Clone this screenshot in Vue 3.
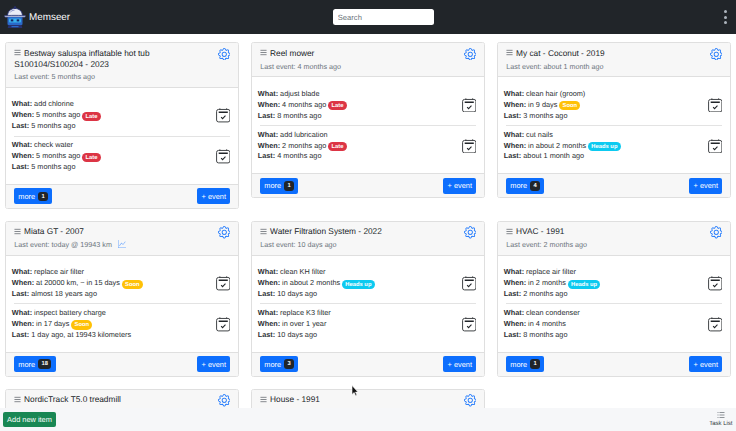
<script setup>
const gear = [
  'M8 4.754a3.246 3.246 0 1 0 0 6.492 3.246 3.246 0 0 0 0-6.492zM5.754 8a2.246 2.246 0 1 1 4.492 0 2.246 2.246 0 0 1-4.492 0z',
  'M9.796 1.343c-.527-1.79-3.065-1.79-3.592 0l-.094.319a.873.873 0 0 1-1.255.52l-.292-.16c-1.64-.892-3.433.902-2.54 2.541l.159.292a.873.873 0 0 1-.52 1.255l-.319.094c-1.79.527-1.79 3.065 0 3.592l.319.094a.873.873 0 0 1 .52 1.255l-.16.292c-.892 1.64.901 3.434 2.541 2.54l.292-.159a.873.873 0 0 1 1.255.52l.094.319c.527 1.79 3.065 1.79 3.592 0l.094-.319a.873.873 0 0 1 1.255-.52l.292.16c1.64.893 3.434-.902 2.54-2.541l-.159-.292a.873.873 0 0 1 .52-1.255l.319-.094c1.79-.527 1.79-3.065 0-3.592l-.319-.094a.873.873 0 0 1-.52-1.255l.16-.292c.893-1.64-.902-3.433-2.541-2.54l-.292.159a.873.873 0 0 1-1.255-.52l-.094-.319zm-2.633.283c.246-.835 1.428-.835 1.674 0l.094.319a1.873 1.873 0 0 0 2.693 1.115l.291-.16c.764-.415 1.6.42 1.184 1.185l-.159.292a1.873 1.873 0 0 0 1.116 2.692l.318.094c.835.246.835 1.428 0 1.674l-.319.094a1.873 1.873 0 0 0-1.115 2.693l.16.291c.415.764-.42 1.6-1.185 1.184l-.291-.159a1.873 1.873 0 0 0-2.693 1.116l-.094.318c-.246.835-1.428.835-1.674 0l-.094-.319a1.873 1.873 0 0 0-2.692-1.115l-.292.16c-.764.415-1.6-.42-1.184-1.185l.159-.291A1.873 1.873 0 0 0 1.945 8.93l-.319-.094c-.835-.246-.835-1.428 0-1.674l.319-.094A1.873 1.873 0 0 0 3.06 4.377l-.16-.292c-.415-.764.42-1.6 1.185-1.184l.292.159a1.873 1.873 0 0 0 2.692-1.115l.094-.319z'
]
const cards = [
  { title: 'Bestway saluspa inflatable hot tub S100104/S100204 - 2023', last: 'Last event: 5 months ago', more: 1, items: [
    { what: 'add chlorine', when: '5 months ago', badge: 'Late', last: '5 months ago' },
    { what: 'check water', when: '5 months ago', badge: 'Late', last: '5 months ago' } ] },
  { title: 'Reel mower', last: 'Last event: 4 months ago', more: 1, items: [
    { what: 'adjust blade', when: '4 months ago', badge: 'Late', last: '8 months ago' },
    { what: 'add lubrication', when: '2 months ago', badge: 'Late', last: '4 months ago' } ] },
  { title: 'My cat - Coconut - 2019', last: 'Last event: about 1 month ago', more: 4, items: [
    { what: 'clean hair (groom)', when: 'in 9 days', badge: 'Soon', last: '3 months ago' },
    { what: 'cut nails', when: 'in about 2 months', badge: 'Heads up', last: 'about 1 month ago' } ] },
  { title: 'Miata GT - 2007', last: 'Last event: today @ 19943 km', chart: true, more: 18, items: [
    { what: 'replace air filter', when: 'at 20000 km, ~ in 15 days', badge: 'Soon', last: 'almost 18 years ago' },
    { what: 'inspect battery charge', when: 'in 17 days', badge: 'Soon', last: '1 day ago, at 19943 kilometers' } ] },
  { title: 'Water Filtration System - 2022', last: 'Last event: 10 days ago', more: 3, items: [
    { what: 'clean KH filter', when: 'in about 2 months', badge: 'Heads up', last: '10 days ago' },
    { what: 'replace K3 filter', when: 'in over 1 year', last: '10 days ago' } ] },
  { title: 'HVAC - 1991', last: 'Last event: 2 months ago', more: 1, items: [
    { what: 'replace air filter', when: 'in 2 months', badge: 'Heads up', last: '2 months ago' },
    { what: 'clean condenser', when: 'in 4 months', last: '8 months ago' } ] },
  { title: 'NordicTrack T5.0 treadmill', more: 1, items: [] },
  { title: 'House - 1991', more: 1, items: [] }
]
const badgeClass = { Late: 'late', Soon: 'soon', 'Heads up': 'heads' }
</script>

<template>
  <div class="page">
    <header class="navbar">
      <div class="brand">
        <svg class="logo" viewBox="0 0 22 23" width="22" height="23">
          <circle cx="11" cy="1.6" r="1.3" fill="#27306e" />
          <path d="M3.5 9.5C4 4.5 7 2.5 11 2.5s7 2 7.500 7z" fill="#e9ecf6" stroke="#27306e" stroke-width="1" />
          <path d="M6 6.500C7 5 8.500 4.300 10.500 4.200" fill="none" stroke="#8e97c9" stroke-width="1" />
          <path d="M.5 9.800c2-.6 19-.6 21 0 .3.900-.2 1.400-1 1.400H1.500c-.8 0-1.300-.5-1-1.400z" fill="#cfd5ee" stroke="#27306e" stroke-width=".7" />
          <rect x="3.500" y="11" width="15" height="8" rx="1" fill="#2a69c9" />
          <rect x="5" y="12.500" width="12" height="4" rx="1" fill="#37b1ee" />
          <rect x="6.800" y="13.400" width="2.500" height="2" fill="#182262" />
          <rect x="12.700" y="13.400" width="2.500" height="2" fill="#182262" />
          <path d="M4.500 19h13l.8 3H3.700z" fill="#27306e" />
          <rect x="7.500" y="20" width="7" height="1.200" fill="#2a69c9" />
        </svg>
        <span class="brand-name">Memseer</span>
      </div>
      <input class="search" type="text" placeholder="Search" />
      <div class="kebab"><i></i><i></i><i></i></div>
    </header>

    <main class="grid">
      <section v-for="card in cards" :key="card.title" class="card">
        <div class="card-head">
          <div class="head-top">
            <div class="title">
              <svg class="menu" viewBox="0 0 16 16" width="7" height="7" fill="none" stroke="#495057" stroke-width="1.500">
                <path d="M1 3h14M1 8h14M1 13h14" />
              </svg>
              {{ card.title }}
            </div>
            <svg class="gear" viewBox="0 0 16 16" width="12.500" height="12.500" fill="#0d6efd">
              <path v-for="d in gear" :key="d" :d="d" />
            </svg>
          </div>
          <div v-if="card.last" class="last-event">
            {{ card.last }}
            <svg v-if="card.chart" class="chart" viewBox="0 0 16 16" width="8" height="8" fill="#6ea8fe">
              <path d="M0 0h1v15h15v1H0V0Zm14.817 3.113a.5.5 0 0 1 .07.704l-4.500 5.500a.5.5 0 0 1-.74.037L7.060 6.767l-3.656 5.027a.5.5 0 0 1-.808-.588l4-5.500a.5.5 0 0 1 .758-.06l2.609 2.610 4.150-5.073a.5.5 0 0 1 .704-.07Z" />
            </svg>
          </div>
        </div>
        <div class="card-body">
          <div v-for="item in card.items" :key="item.what" class="item">
            <div class="item-text">
              <div class="line"><b>What:</b> {{ item.what }}</div>
              <div class="line"><b>When:</b> {{ item.when }} <span v-if="item.badge" class="badge" :class="badgeClass[item.badge]">{{ item.badge }}</span></div>
              <div class="line"><b>Last:</b> {{ item.last }}</div>
            </div>
            <svg class="cal" viewBox="0 0 15 15" width="14.500" height="14.500" fill="none" stroke="#3a3d40">
              <path d="M4 .3v1.500M11 .3v1.500" stroke-width=".9" />
              <rect x=".6" y="1.500" width="13.800" height="12.900" rx="2" stroke-width="1" />
              <path d="M2.800 4.400h9.400" stroke-width="1.500" stroke="#212529" />
              <path d="M5.300 9.500l1.500 1.500 3-3" stroke-width="1.100" stroke="#212529" />
            </svg>
          </div>
        </div>
        <div class="card-foot">
          <button class="btn">more <span class="count">{{ card.more }}</span></button>
          <button class="btn event">+ event</button>
        </div>
      </section>
    </main>

    <svg class="cursor" viewBox="0 0 8 12" width="8" height="12">
      <path d="M1 .5v9l2.200-2 1.400 3.200 1.300-.6-1.400-3H7z" fill="#111" stroke="#fff" stroke-width=".6" />
    </svg>

    <footer class="bottom">
      <button class="add">Add new item</button>
      <div class="task">
        <svg viewBox="0 0 16 16" width="8" height="8" fill="none" stroke="#495057" stroke-width="1.200">
          <path d="M5 3h10M5 8h10M5 13h10M1 3h2M1 8h2M1 13h2" />
        </svg>
        <span>Task List</span>
      </div>
    </footer>
  </div>
</template>

<style>
html, body { margin: 0; background: #fff; }
</style>

<style scoped>
.page {
  position: relative;
  width: 736px;
  height: 431px;
  overflow: hidden;
  font-family: "Liberation Sans", Inter, sans-serif;
  text-rendering: geometricPrecision;
  color: #2b2f33;
  background: #fff;
}
.navbar {
  height: 34px;
  background: #212529;
  display: grid;
  grid-template-columns: 329.300px 100.500px 1fr;
  align-items: center;
  padding: 0 9px 0 4px;
  box-sizing: border-box;
}
.brand { display: flex; align-items: center; gap: 3px; }
.logo { display: block; }
.brand-name { color: #fff; font-size: 9.900px; }
.search {
  height: 15.500px;
  width: 100.500px;
  box-sizing: border-box;
  border: 0;
  border-radius: 2.500px;
  padding: 0 4.500px;
  font: 7.600px "Liberation Sans", Inter, sans-serif;
  text-rendering: geometricPrecision;
  background: #fff;
  outline: none;
}
.search::placeholder { color: #6c757d; }
.kebab { justify-self: end; display: flex; flex-direction: column; gap: 2.500px; }
.kebab i { width: 3px; height: 3px; border-radius: 50%; background: #adb5bd; display: block; }
.grid {
  display: grid;
  grid-template-columns: repeat(3, 233.500px);
  column-gap: 12.500px;
  row-gap: 11.900px;
  align-items: start;
  padding: 8.300px 5.300px 0;
}
.card {
  border: 1px solid #dfdfdf;
  border-radius: 2.500px;
  overflow: hidden;
  background: #fff;
  box-sizing: border-box;
}
.card-head {
  background: #f7f7f7;
  border-bottom: 1px solid #dfdfdf;
  padding: 4.500px 7.500px 4.400px 8px;
}
.head-top { display: flex; justify-content: space-between; align-items: flex-start; }
.title { font-size: 8.300px; line-height: 11.500px; width: 195px; color: #212529; }
.menu { vertical-align: -.5px; margin: 0 1px 0 -.5px; }
.gear { flex: none; margin-top: 0; }
.last-event { font-size: 7.200px; line-height: 11px; margin-top: .6px; color: #6c757d; }
.chart { margin-left: 4px; vertical-align: -1px; }
.card-body { padding: 8px 7.500px 7.500px; font-size: 7.300px; }
.item { display: flex; justify-content: space-between; align-items: center; padding: 3.700px 0; }
.item + .item { border-top: 1px solid #e3e3e3; }
.item-text { margin-left: -2px; }
.line { height: 10.800px; line-height: 10.800px; white-space: nowrap; }
.item-text b { font-weight: 700; }
.cal { flex: none; }
.badge {
  display: inline-block;
  font-size: 5.800px;
  line-height: 10px;
  height: 9.200px;
  font-weight: 700;
  border-radius: 5px;
  padding: 0 3.200px;
  vertical-align: top;
  margin-top: 1.500px;
  color: #fff;
}
.late { background: #dc3545; }
.soon { background: #ffc107; }
.heads { background: #0dcaf0; }
.card-foot {
  background: #f7f7f7;
  border-top: 1px solid #dfdfdf;
  display: flex;
  justify-content: space-between;
  padding: 3.500px 7.500px;
}
.btn {
  height: 16px;
  padding: 0 4.500px;
  border: 0;
  border-radius: 2px;
  background: #0d6efd;
  color: #fff;
  font: 7.400px "Liberation Sans", Inter, sans-serif;
  text-rendering: geometricPrecision;
  display: flex;
  align-items: center;
  gap: 2px;
}
.event { width: 33px; justify-content: center; padding: 0; }
.count {
  background: #212529;
  color: #fff;
  font-size: 5.800px;
  font-weight: 700;
  border-radius: 3px;
  padding: 0 3.300px;
  line-height: 10px;
  height: 9.500px;
  margin-left: 1px;
}
.bottom {
  position: absolute;
  left: 0;
  right: 0;
  bottom: 0;
  height: 23px;
  background: #f6f7f9;
  display: flex;
  justify-content: space-between;
  align-items: center;
  padding: 0 3.500px 0 3px;
  box-sizing: border-box;
}
.add {
  height: 15.500px;
  width: 53px;
  padding: 0;
  border: 0;
  border-radius: 2px;
  background: #198754;
  color: #fff;
  font: 7.400px "Liberation Sans", Inter, sans-serif;
  text-rendering: geometricPrecision;
}
.task { display: flex; flex-direction: column; align-items: center; gap: 1px; font-size: 6px; line-height: 8px; color: #343a40; }
.task svg { display: block; }
.cursor { position: absolute; left: 351px; top: 385px; }
</style>
